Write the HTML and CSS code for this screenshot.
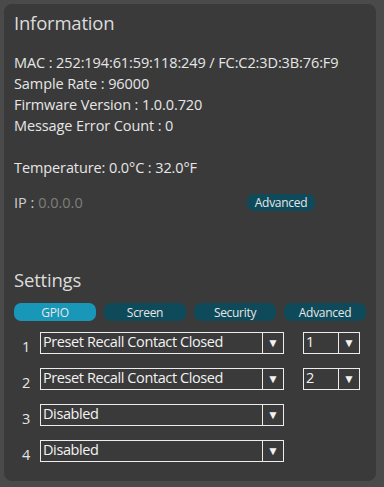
FILE: index.html
```html
<!DOCTYPE html>
<html lang="en">
<head>
  <meta charset="UTF-8">
  <title>Device Information</title>
  <link rel="stylesheet" href="styles.css">
</head>
<body>
  <div class="panel">
    <h2>Information</h2>
    <div class="info">
      <p>MAC : 252:194:61:59:118:249 / FC:C2:3D:3B:76:F9</p>
      <p>Sample Rate : 96000</p>
      <p>Firmware Version : 1.0.0.720</p>
      <p>Message Error Count : 0</p>
    </div>
    <p class="temp">Temperature: 0.0°C : 32.0°F</p>
    <div class="ip-row">
      <span class="ip">IP : <span class="ip-value">0.0.0.0</span></span>
      <button class="pill small">Advanced</button>
    </div>

    <h2 class="settings-title">Settings</h2>
    <div class="tabs">
      <button class="pill tab active">GPIO</button>
      <button class="pill tab">Screen</button>
      <button class="pill tab">Security</button>
      <button class="pill tab">Advanced</button>
    </div>

    <div class="gpio">
      <div class="gpio-row">
        <span class="num">1</span>
        <div class="select wide"><span class="val">Preset Recall Contact Closed</span><span class="arrow">▼</span></div>
        <div class="select narrow"><span class="val">1</span><span class="arrow">▼</span></div>
      </div>
      <div class="gpio-row">
        <span class="num">2</span>
        <div class="select wide"><span class="val">Preset Recall Contact Closed</span><span class="arrow">▼</span></div>
        <div class="select narrow"><span class="val">2</span><span class="arrow">▼</span></div>
      </div>
      <div class="gpio-row">
        <span class="num">3</span>
        <div class="select wide"><span class="val">Disabled</span><span class="arrow">▼</span></div>
      </div>
      <div class="gpio-row">
        <span class="num">4</span>
        <div class="select wide"><span class="val">Disabled</span><span class="arrow">▼</span></div>
      </div>
    </div>
  </div>
</body>
</html>
```

FILE: styles.css
```css
html, body {
  height: 100%;
}
body {
  margin: 0;
  background: #4a4a4a;
  font-family: 'Open Sans', sans-serif;
  color: #e6e6e6;
  padding: 4px 8px 6px 4px;
  box-sizing: border-box;
}
.panel {
  background: #3a3a3a;
  border-radius: 8px;
  height: 100%;
  box-sizing: border-box;
  padding: 5px 10px 0 10px;
}
h2 {
  margin: 0;
  font-weight: normal;
  font-size: 18.5px;
  line-height: 28px;
  color: #dcdcdc;
  letter-spacing: -0.2px;
}
.info {
  margin-top: 15px;
}
.info p, .temp {
  margin: 0;
  font-size: 14.5px;
  line-height: 21px;
  letter-spacing: -0.1px;
}
.temp {
  margin-top: 21px;
}
.ip-row {
  display: flex;
  align-items: center;
  margin-top: 14px;
  height: 20px;
}
.ip {
  font-size: 14.5px;
  color: #cfcfcf;
  width: 233px;
}
.ip-value {
  color: #7e7e7e;
}
.pill {
  border: none;
  background: #0e4a5a;
  color: #e6e6e6;
  font-family: 'Open Sans', sans-serif;
  border-radius: 7px;
  padding: 0;
  font-size: 12px;
  letter-spacing: -0.3px;
}
.pill.small {
  width: 68px;
  height: 17px;
}
.settings-title {
  margin-top: 54px;
}
.tabs {
  display: grid;
  grid-template-columns: repeat(4, 1fr);
  gap: 8px;
  margin-top: 9px;
}
.tab {
  height: 18px;
}
.tab.active {
  background: #1897b8;
}
.gpio {
  display: flex;
  flex-direction: column;
  gap: 14px;
  margin-top: 11px;
}
.gpio-row {
  display: flex;
  align-items: center;
  height: 22px;
}
.num {
  width: 26px;
  padding-left: 8px;
  box-sizing: border-box;
  font-size: 14.5px;
  margin-top: 6px;
}
.select {
  display: flex;
  border: 1.5px solid #ececec;
  height: 22px;
  box-sizing: border-box;
  font-size: 14.5px;
  line-height: 17px;
  color: #f2f2f2;
}
.select .val {
  flex: 1;
  padding-left: 2px;
  letter-spacing: -0.4px;
  white-space: nowrap;
  overflow: hidden;
}
.select .arrow {
  width: 20px;
  border-left: 1.5px solid #ececec;
  text-align: center;
  font-size: 12px;
  line-height: 19px;
}
.select.wide {
  width: 244px;
}
.select.narrow {
  width: 57px;
  margin-left: 19px;
}
```
